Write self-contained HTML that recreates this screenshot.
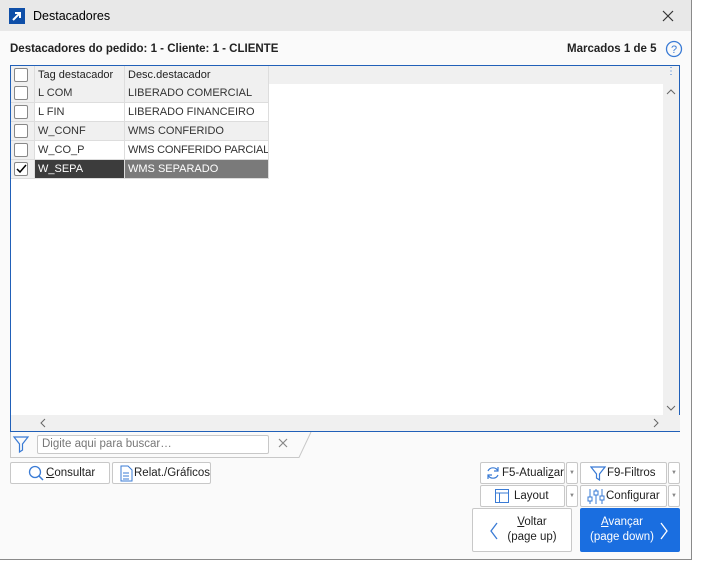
<!DOCTYPE html>
<html><head><meta charset="utf-8"><style>
*{box-sizing:border-box;margin:0;padding:0}
body{width:706px;height:566px;background:#fff;font-family:"Liberation Sans",sans-serif;font-size:11px;color:#222;position:relative;overflow:hidden}
.win{position:absolute;left:0;top:0;width:692px;height:560px;border:1px solid #8a8a8a;border-top:none;border-left:none;background:#fafafa}
.title{position:absolute;left:0;top:0;width:691px;height:31px;background:#e8e8e8}
.title .ic{position:absolute;left:9px;top:8px;width:16px;height:16px;background:#0f4fa8}
.title .t{position:absolute;left:33px;top:9px;font-size:12.5px;color:#000}
.hdr{position:absolute;top:43px;font-weight:bold;font-size:11.5px;color:#222;white-space:nowrap}
.grid{position:absolute;left:10px;top:65px;width:670px;height:367px;border:1px solid #2160b8;background:#fff}
.row{position:absolute;left:0;height:19px;width:258px}
.c{position:absolute;top:0;height:19px;line-height:18px;padding-left:3px;border-right:1px solid #ddd;border-bottom:1px solid #ddd;color:#333;white-space:nowrap;overflow:hidden;font-size:11px}
.cb{position:absolute;left:3px;top:2px;width:14px;height:14px;border:1px solid #888;background:#fff;border-radius:2px}
.vs{position:absolute;right:0;top:0;width:16px;height:350px;background:#f0f0f0}
.hs{position:absolute;left:0;bottom:0;width:669px;height:16px;background:#f0f0f0}
.btn{position:absolute;height:22px;border:1px solid #c8c8c8;background:#fff;border-radius:2px;line-height:20px;font-size:11.5px;color:#222;white-space:nowrap}
.dd{position:absolute;width:12px;height:22px;border:1px solid #c8c8c8;background:#fff;border-radius:2px;font-size:6px;color:#888;text-align:center;line-height:20px}
</style></head><body>
<div class="win">
<div class="title"><div class="ic"><svg width="16" height="16"><path d="M4 12L11 5M6 5h5v5" stroke="#fff" stroke-width="2" fill="none"/></svg></div><div class="t">Destacadores</div><svg style="position:absolute;left:662px;top:10px" width="12" height="12"><path d="M1 1l10 10M11 1L1 11" stroke="#333" stroke-width="1.2"/></svg></div>
<div class="hdr" style="left:10px">Destacadores do pedido: 1 - Cliente: 1 - CLIENTE</div>
<div class="hdr" style="left:567px">Marcados 1 de 5</div>
<svg style="position:absolute;left:665px;top:40px" width="18" height="18"><circle cx="9" cy="9" r="7.5" stroke="#3a7bd5" stroke-width="1.3" fill="none"/><text x="9" y="13" text-anchor="middle" font-size="11" fill="#3a7bd5" font-family="Liberation Sans">?</text></svg>
<div class="grid">
 <div style="position:absolute;left:0;top:0;width:653px;height:18px;background:#f0f0f0"></div>
 <div class="row" style="top:0"><div class="c" style="left:0;width:24px;background:#f0f0f0"><div class="cb"></div></div><div class="c" style="left:24px;width:90px;background:#f0f0f0;color:#222">Tag destacador</div><div class="c" style="left:114px;width:144px;background:#f0f0f0;color:#222">Desc.destacador</div></div>
 <div class="row" style="top:18px"><div class="c" style="left:0;width:24px;background:#f0f0f0"><div class="cb"></div></div><div class="c" style="left:24px;width:90px;background:#f0f0f0">L COM</div><div class="c" style="left:114px;width:144px;background:#f0f0f0">LIBERADO COMERCIAL</div></div>
 <div class="row" style="top:37px"><div class="c" style="left:0;width:24px;background:#f0f0f0"><div class="cb"></div></div><div class="c" style="left:24px;width:90px">L FIN</div><div class="c" style="left:114px;width:144px">LIBERADO FINANCEIRO</div></div>
 <div class="row" style="top:56px"><div class="c" style="left:0;width:24px;background:#f0f0f0"><div class="cb"></div></div><div class="c" style="left:24px;width:90px;background:#f0f0f0">W_CONF</div><div class="c" style="left:114px;width:144px;background:#f0f0f0">WMS CONFERIDO</div></div>
 <div class="row" style="top:75px"><div class="c" style="left:0;width:24px;background:#f0f0f0"><div class="cb"></div></div><div class="c" style="left:24px;width:90px">W_CO_P</div><div class="c" style="left:114px;width:144px;letter-spacing:-0.2px">WMS CONFERIDO PARCIAL</div></div>
 <div class="row" style="top:94px"><div class="c" style="left:0;width:24px;background:#f0f0f0"><div class="cb"><svg width="12" height="12" style="position:absolute;left:0;top:0"><path d="M2 6l3 3 6-7" stroke="#000" stroke-width="1.5" fill="none"/></svg></div></div><div class="c" style="left:24px;width:90px;background:#3c3c3c;color:#fff">W_SEPA</div><div class="c" style="left:114px;width:144px;background:#7a7a7a;color:#fff">WMS SEPARADO</div></div>
 <div class="vs" style="top:0"><div style="text-align:center;color:#3a7bd5;font-size:10px;line-height:8px;padding-top:2px">⋮</div><svg width="16" height="16" style="position:absolute;top:18px;left:0"><path d="M4 10l4-4 4 4" stroke="#666" fill="none"/></svg><svg width="16" height="16" style="position:absolute;top:334px;left:0"><path d="M4 6l4 4 4-4" stroke="#666" fill="none"/></svg></div>
 <div class="hs"><svg width="16" height="16" style="position:absolute;left:24px"><path d="M10 4l-4 4 4 4" stroke="#666" fill="none"/></svg><svg width="16" height="16" style="position:absolute;left:637px"><path d="M6 4l4 4-4 4" stroke="#666" fill="none"/></svg></div>
</div>
<svg style="position:absolute;left:10px;top:432px" width="310" height="27"><path d="M0.5 0V25.5H289L301 0" stroke="#c8c8c8" fill="none"/><path d="M4 5h14l-5.5 7v6l-3 2v-8z" stroke="#3a7bd5" stroke-width="1.2" fill="none"/><path d="M269 7l8 8M277 7l-8 8" stroke="#888" stroke-width="1.2"/></svg>
<div style="position:absolute;left:37px;top:435px;width:232px;height:19px;border:1px solid #c8c8c8;background:#fff;border-radius:2px;padding-left:4px;line-height:17px;color:#777;font-size:11.5px">Digite aqui para buscar…</div>
<div class="btn" style="left:10px;top:462px;width:100px;padding-left:35px"><svg style="position:absolute;left:17px;top:2px" width="16" height="16"><circle cx="7" cy="7" r="5.5" stroke="#3a7bd5" stroke-width="1.3" fill="none"/><path d="M11 11l4 4" stroke="#3a7bd5" stroke-width="1.5"/></svg><u>C</u>onsultar</div>
<div class="btn" style="left:112px;top:462px;width:99px;padding-left:21px"><svg style="position:absolute;left:6px;top:2px" width="14" height="17"><path d="M2 1h7l4 4v11H2z" stroke="#3a7bd5" fill="none"/><path d="M4 8h6M4 11h6M4 14h6" stroke="#3a7bd5"/></svg>Relat./Gráficos</div>
<div class="btn" style="left:480px;top:462px;width:85px;padding-left:21px"><svg style="position:absolute;left:4px;top:2px" width="16" height="16"><path d="M13 6A5.5 5.5 0 0 0 3 6M3 10A5.5 5.5 0 0 0 13 10M13 2v4h-4M3 14v-4h4" stroke="#3a7bd5" fill="none" stroke-width="1.2"/></svg>F5-Atuali<u>z</u>ar</div>
<div class="dd" style="left:566px;top:462px">▼</div>
<div class="btn" style="left:580px;top:462px;width:87px;padding-left:26px"><svg style="position:absolute;left:9px;top:2px" width="16" height="16"><path d="M1 2h14l-5.5 7v6l-3-2v-4z" stroke="#3a7bd5" fill="none" stroke-width="1.2"/></svg>F9-Filtros</div>
<div class="dd" style="left:668px;top:462px">▼</div>
<div class="btn" style="left:480px;top:485px;width:85px;padding-left:33px"><svg style="position:absolute;left:13px;top:2px" width="16" height="16"><rect x="1.5" y="1.5" width="13" height="13" stroke="#3a7bd5" fill="none"/><path d="M1.5 5h13M5.5 5v9.5" stroke="#3a7bd5"/></svg>Layout</div>
<div class="dd" style="left:566px;top:485px">▼</div>
<div class="btn" style="left:580px;top:485px;width:87px;padding-left:25px"><svg style="position:absolute;left:6px;top:2px" width="18" height="17"><path d="M3 1v15M9 1v15M15 1v15" stroke="#3a7bd5"/><rect x="1" y="9" width="4" height="4" fill="#fff" stroke="#3a7bd5"/><rect x="7" y="3" width="4" height="4" fill="#fff" stroke="#3a7bd5"/><rect x="13" y="8" width="4" height="4" fill="#fff" stroke="#3a7bd5"/></svg>Configurar</div>
<div class="dd" style="left:668px;top:485px">▼</div>
<div class="btn" style="left:472px;top:508px;width:100px;height:44px;line-height:15px;text-align:center;padding:6px 0 0 20px"><svg style="position:absolute;left:16px;top:13px" width="10" height="18"><path d="M8 1L2 9l6 8" stroke="#3a7bd5" fill="none" stroke-width="1.3"/></svg><u>V</u>oltar<br>(page up)</div>
<div class="btn" style="left:580px;top:508px;width:100px;height:44px;line-height:15px;text-align:center;padding:6px 16px 0 0;background:#1a6ee0;border-color:#1a6ee0;color:#fff"><svg style="position:absolute;left:78px;top:13px" width="10" height="18"><path d="M2 1l6 8-6 8" stroke="#fff" fill="none" stroke-width="1.3"/></svg><u>A</u>vançar<br>(page down)</div>
</div>
</body></html>
